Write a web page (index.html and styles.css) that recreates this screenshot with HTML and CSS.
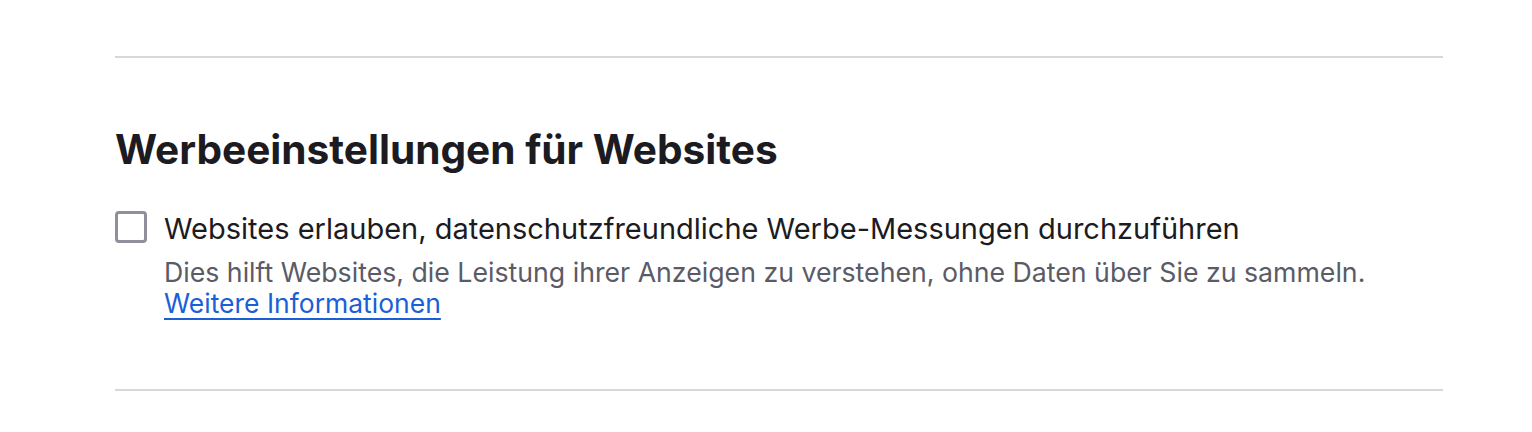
FILE: index.html
```html
<!doctype html>
<html lang="de">
	<head>
		<meta charset="utf-8">
		<meta name="viewport" content="width=device-width, initial-scale=1">
		<title>Werbeeinstellungen</title>

		<link rel="stylesheet" href="styles.css">
	</head>
	<body>
		<section class="prefs">
			<hr class="separator">

			<h2 class="heading">Werbeeinstellungen für Websites</h2>

			<div class="option">
				<input type="checkbox" id="privateAttribution" class="check">
				<div class="optionText">
					<label for="privateAttribution" class="optionLabel">Websites erlauben, datenschutzfreundliche Werbe-Messungen durchzuführen</label>
					<p class="description">Dies hilft Websites, die Leistung ihrer Anzeigen zu verstehen, ohne Daten über Sie zu sammeln.</p>
					<a href="#" class="learnMore">Weitere Informationen</a>
				</div>
			</div>

			<hr class="separator separatorBottom">
		</section>
	</body>
</html>
```

FILE: styles.css
```css
body {
	margin: 0;
	background: #fff;
	font-family: Inter, "Noto Sans", sans-serif;
	color: #1c1b22;
}

.prefs {
	width: 1328px;
	margin-left: 115px;
	padding-top: 56px;
}

.separator {
	border: 0;
	height: 2px;
	margin: 0;
	background: #d8d8dc;
}

.separatorBottom {
	margin-top: 70px;
}

.heading {
	font-size: 40.6px;
	font-weight: 700;
	line-height: 50px;
	margin: 67px 0 0;
}

.option {
	display: flex;
	align-items: flex-start;
	gap: 17px;
	margin-top: 36px;
}

.check {
	appearance: none;
	-webkit-appearance: none;
	box-sizing: border-box;
	flex: none;
	width: 32px;
	height: 32px;
	margin: 0;
	border: 3px solid #8f8f9d;
	border-radius: 4px;
	background: #fff;
}

.optionText {
	display: flex;
	flex-direction: column;
}

.optionLabel {
	font-size: 29px;
	line-height: 36px;
}

.description {
	margin: 10px 0 0;
	font-size: 26.7px;
	line-height: 31px;
	color: #5b5b66;
}

.learnMore {
	align-self: flex-start;
	font-size: 26.5px;
	line-height: 31px;
	color: #1a5fd6;
	text-decoration: underline;
	text-decoration-thickness: 2px;
	text-underline-offset: 5px;
}
```
